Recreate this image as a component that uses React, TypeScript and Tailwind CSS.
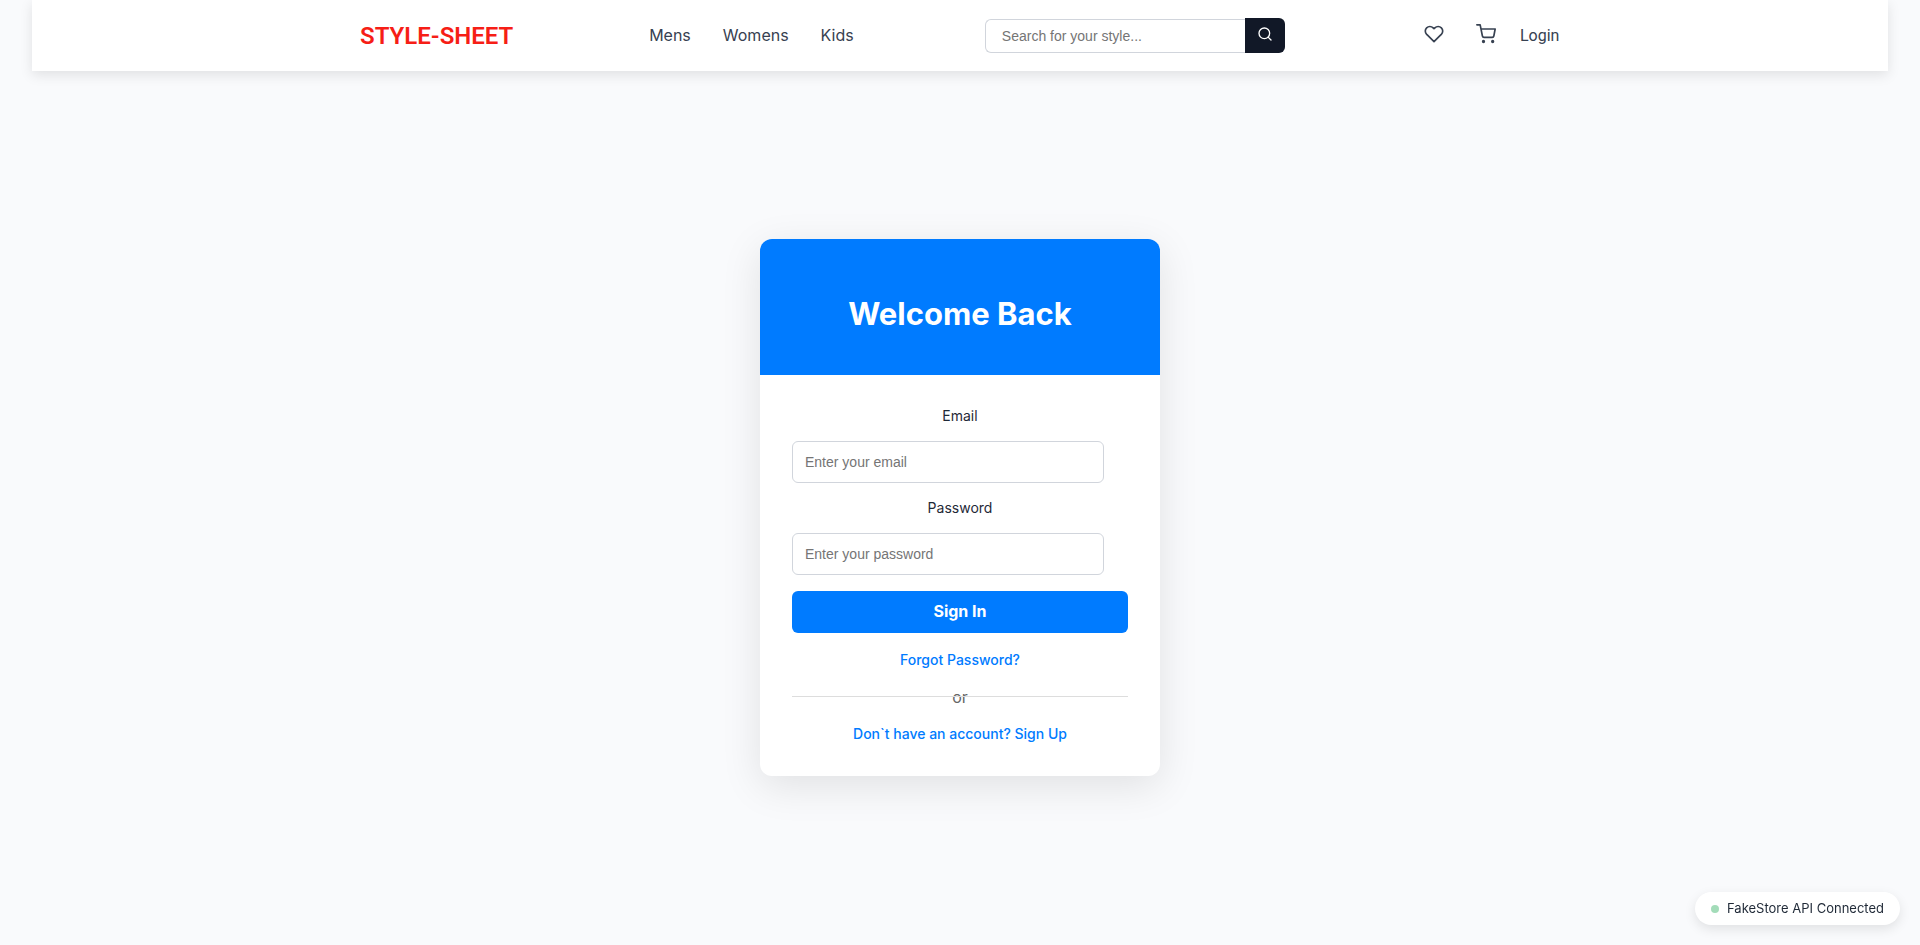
import { FiHeart, FiSearch, FiShoppingCart } from "react-icons/fi";

const categories = ["Mens", "Womens", "Kids"];

function Header() {
  return (
    <header className="mx-8 bg-white px-4 shadow-[0_4px_12px_rgba(0,0,0,0.1)]">
      <div className="mx-auto flex h-[71px] max-w-[1200px] items-center justify-between">
        <a href="#home" className="min-w-[158px] font-['Roboto',sans-serif] text-2xl font-semibold text-[#f61e16]">
          STYLE-SHEET
        </a>
        <nav className="flex gap-8 pb-px text-[#374151]">
          {categories.map((name) => (
            <a key={name} href={`#${name.toLowerCase()}`}>
              {name}
            </a>
          ))}
        </nav>
        <form role="search" className="flex items-end">
          <input
            type="search"
            aria-label="Search for your style"
            placeholder="Search for your style..."
            className="h-[34px] w-[260px] rounded-l-md border border-r-0 border-gray-300 px-4 font-['Liberation_Sans',Arial,sans-serif] text-sm placeholder:text-[#757575]"
          />
          <button
            type="submit"
            aria-label="Search"
            className="flex h-[35px] w-10 items-center justify-center rounded-r-md bg-[#111827] pb-1 text-white"
          >
            <FiSearch size={16} />
          </button>
        </form>
        <div className="flex items-center gap-4 text-[#374151]">
          <a href="#wishlist" aria-label="Wishlist" className="px-2 pb-1">
            <FiHeart size={20} />
          </a>
          <a href="#cart" aria-label="Cart" className="px-2 pb-1">
            <FiShoppingCart size={20} />
          </a>
          <a href="#login" className="min-w-10 font-['Roboto',sans-serif]">
            Login
          </a>
        </div>
      </div>
    </header>
  );
}

const fieldClass =
  "h-[42px] w-[312px] rounded-md border border-gray-300 px-3 font-['Liberation_Sans',Arial,sans-serif] text-sm placeholder:text-[#757575]";

function LoginCard() {
  return (
    <section className="w-[400px] overflow-hidden rounded-xl bg-white shadow-[0_10px_40px_rgba(0,0,0,0.1)]">
      <div className="flex h-[136px] items-center justify-center bg-[#007bff] pt-3.5">
        <h1 className="text-[31px] font-bold text-white">Welcome Back</h1>
      </div>
      <form className="flex flex-col p-8">
        <label htmlFor="email" className="mb-4 text-center text-sm leading-[18px] text-[#1f2937]">
          Email
        </label>
        <input id="email" type="email" placeholder="Enter your email" className={fieldClass} />
        <label htmlFor="password" className="my-4 text-center text-sm leading-[18px] text-[#1f2937]">
          Password
        </label>
        <input id="password" type="password" placeholder="Enter your password" className={fieldClass} />
        <button type="submit" className="mt-4 h-[42px] rounded-md bg-[#007bff] pb-0.5 text-base font-bold text-white">
          Sign In
        </button>
        <a href="#forgot" className="mt-4 text-center text-sm leading-[22px] font-medium text-[#007bff]">
          Forgot Password?
        </a>
        <div className="relative my-4 text-center leading-[21px] text-[#666666]">
          <span>or</span>
          <hr className="absolute inset-x-0 top-[9px] border-[#dddddd]" />
        </div>
        <a href="#signup" className="text-center text-sm leading-5 font-medium text-[#007bff]">
          Don`t have an account? Sign Up
        </a>
      </form>
    </section>
  );
}

export default function App() {
  return (
    <div className="flex min-h-screen flex-col bg-[#f9fafc] font-['Inter',sans-serif]">
      <Header />
      <main className="flex flex-1 items-center justify-center pb-px">
        <LoginCard />
      </main>
      <div
        role="status"
        className="fixed right-5 bottom-5 flex h-[33px] items-center gap-2 rounded-full bg-white px-4 text-[13px] text-[#1f2937] shadow-[0_4px_12px_rgba(0,0,0,0.1)]"
      >
        <span className="size-2 rounded-full bg-[#a3dcb9]" />
        FakeStore API Connected
      </div>
    </div>
  );
}
